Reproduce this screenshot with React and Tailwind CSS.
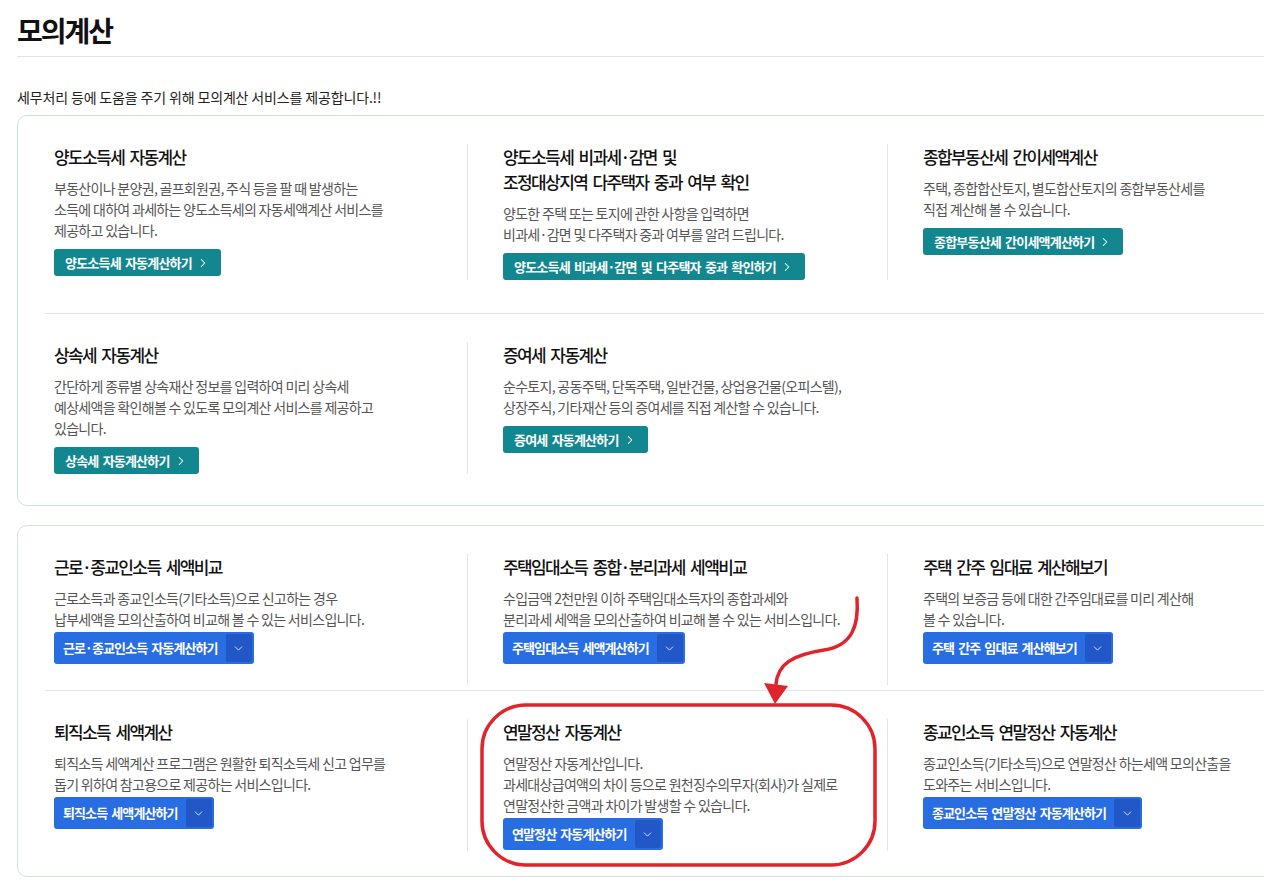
import React from "react";
import { ChevronRight, ChevronDown } from "lucide-react";

const box1 = [
  [
    {
      title: ["양도소득세 자동계산"],
      desc: [
        "부동산이나 분양권, 골프회원권, 주식 등을 팔 때 발생하는",
        "소득에 대하여 과세하는 양도소득세의 자동세액계산 서비스를",
        "제공하고 있습니다.",
      ],
      btn: "양도소득세 자동계산하기",
    },
    {
      title: ["양도소득세 비과세·감면 및", "조정대상지역 다주택자 중과 여부 확인"],
      desc: [
        "양도한 주택 또는 토지에 관한 사항을 입력하면",
        "비과세·감면 및 다주택자 중과 여부를 알려 드립니다.",
      ],
      btn: "양도소득세 비과세·감면 및 다주택자 중과 확인하기",
    },
    {
      title: ["종합부동산세 간이세액계산"],
      desc: [
        "주택, 종합합산토지, 별도합산토지의 종합부동산세를",
        "직접 계산해 볼 수 있습니다.",
      ],
      btn: "종합부동산세 간이세액계산하기",
    },
  ],
  [
    {
      title: ["상속세 자동계산"],
      desc: [
        "간단하게 종류별 상속재산 정보를 입력하여 미리 상속세",
        "예상세액을 확인해볼 수 있도록 모의계산 서비스를 제공하고",
        "있습니다.",
      ],
      btn: "상속세 자동계산하기",
    },
    {
      title: ["증여세 자동계산"],
      desc: [
        "순수토지, 공동주택, 단독주택, 일반건물, 상업용건물(오피스텔),",
        "상장주식, 기타재산 등의 증여세를 직접 계산할 수 있습니다.",
      ],
      btn: "증여세 자동계산하기",
    },
  ],
];

const box2 = [
  [
    {
      title: ["근로·종교인소득 세액비교"],
      desc: [
        "근로소득과 종교인소득(기타소득)으로 신고하는 경우",
        "납부세액을 모의산출하여 비교해 볼 수 있는 서비스입니다.",
      ],
      btn: "근로·종교인소득 자동계산하기",
    },
    {
      title: ["주택임대소득 종합·분리과세 세액비교"],
      desc: [
        "수입금액 2천만원 이하 주택임대소득자의 종합과세와",
        "분리과세 세액을 모의산출하여 비교해 볼 수 있는 서비스입니다.",
      ],
      btn: "주택임대소득 세액계산하기",
    },
    {
      title: ["주택 간주 임대료 계산해보기"],
      desc: ["주택의 보증금 등에 대한 간주임대료를 미리 계산해", "볼 수 있습니다."],
      btn: "주택 간주 임대료 계산해보기",
    },
  ],
  [
    {
      title: ["퇴직소득 세액계산"],
      desc: [
        "퇴직소득 세액계산 프로그램은 원활한 퇴직소득세 신고 업무를",
        "돕기 위하여 참고용으로 제공하는 서비스입니다.",
      ],
      btn: "퇴직소득 세액계산하기",
    },
    {
      title: ["연말정산 자동계산"],
      desc: [
        "연말정산 자동계산입니다.",
        "과세대상급여액의 차이 등으로 원천징수의무자(회사)가 실제로",
        "연말정산한 금액과 차이가 발생할 수 있습니다.",
      ],
      btn: "연말정산 자동계산하기",
    },
    {
      title: ["종교인소득 연말정산 자동계산"],
      desc: [
        "종교인소득(기타소득)으로 연말정산 하는세액 모의산출을",
        "도와주는 서비스입니다.",
      ],
      btn: "종교인소득 연말정산 자동계산하기",
    },
  ],
];

const TealButton = ({ label }) => (
  <button className="mt-[8px] inline-flex items-center h-[27px] pl-[11px] pr-[11px] rounded-[3px] bg-[#12878f] text-white text-[13px] font-bold tracking-[-0.8px] [word-spacing:2px] whitespace-nowrap">
    {label}
    <ChevronRight size={14} strokeWidth={1.8} className="ml-[4px]" />
  </button>
);

const BlueButton = ({ label }) => (
  <div className="mt-[2px] inline-flex items-stretch h-[32px] p-[2px] pl-[9px] rounded-[3px] bg-[#286de2] text-white">
    <span className="flex items-center text-[13px] font-bold tracking-[-0.9px] [word-spacing:2px] whitespace-nowrap pr-[8px]">
      {label}
    </span>
    <span className="flex items-center justify-center w-[26px] bg-[#2157c6] rounded-[2px]">
      <ChevronDown size={13} strokeWidth={1.5} />
    </span>
  </div>
);

const Item = ({ item, first, blue, pad }) => (
  <div
    className={`${pad} ${
      first ? "pl-[9px]" : "pl-[35px] border-l border-[#e4e4e4]"
    }`}
  >
    <h3 className="text-[17px] leading-[25px] font-medium text-[#111] tracking-[-1.6px] [word-spacing:3px] whitespace-nowrap">
      {item.title.map((t, i) => (
        <div key={i}>{t}</div>
      ))}
    </h3>
    <p className="mt-[9px] text-[14px] leading-[21px] text-[#555] tracking-[-0.7px] whitespace-nowrap">
      {item.desc.map((t, i) => (
        <span key={i}>
          {t}
          <br />
        </span>
      ))}
    </p>
    {blue ? <BlueButton label={item.btn} /> : <TealButton label={item.btn} />}
  </div>
);

const Box = ({ rows, blue, border, rowPads, itemPads }) => (
  <div className={`w-[1330px] rounded-[10px] border ${border} px-[27px]`}>
    {rows.map((row, ri) => (
      <div
        key={ri}
        className={ri > 0 ? "border-t border-[#e4e4e4] pt-[28px]" : "pt-[28px]"}
      >
        <div className={`grid grid-cols-[422px_420px_420px] ${rowPads[ri]}`}>
          {row.map((item, i) => (
            <Item
              key={i}
              item={item}
              first={i === 0}
              blue={blue}
              pad={itemPads[ri]}
            />
          ))}
        </div>
      </div>
    ))}
  </div>
);

export default function App() {
  return (
    <div className="relative w-[1264px] h-[883px] overflow-hidden bg-white font-['Noto_Sans_CJK_KR',sans-serif]">
      <div className="pl-[17px]">
        <h1 className="pt-[10px] text-[28px] leading-[40px] font-bold text-[#111] tracking-[-2px]">
          모의계산
        </h1>
        <div className="mt-[6px] border-t border-[#e3e3e3]" />
        <p className="mt-[30px] text-[14px] leading-[20px] text-[#222] tracking-[-0.15px]">
          세무처리 등에 도움을 주기 위해 모의계산 서비스를 제공합니다.!!
        </p>
        <div className="mt-[8px]">
          <Box
            rows={box1}
            border="border-[#cde0e4]"
            rowPads={["pb-[33px]", "pb-[31px]"]}
            itemPads={["pb-0", "pb-0"]}
          />
        </div>
        <div className="mt-[19px]">
          <Box
            rows={box2}
            blue
            border="border-[#d6dee6]"
            rowPads={["pb-[5px]", "pb-[25px]"]}
            itemPads={["pb-[21px]", "pb-[1px]"]}
          />
        </div>
      </div>

      {/* annotation */}
      <svg
        className="absolute inset-0 pointer-events-none"
        width="1264"
        height="883"
        viewBox="0 0 1264 883"
      >
        <path
          d="M857 598 C859 626 852 646 824 650 C792 655 778 664 776 684"
          fill="none"
          stroke="#e1232b"
          strokeWidth="3.5"
          strokeLinecap="round"
        />
        <polygon points="764,683 788,686 775,704" fill="#e1232b" />
        <rect
          x="482"
          y="705"
          width="393"
          height="160"
          rx="44"
          fill="none"
          stroke="#e1232b"
          strokeWidth="3.5"
        />
      </svg>
    </div>
  );
}
